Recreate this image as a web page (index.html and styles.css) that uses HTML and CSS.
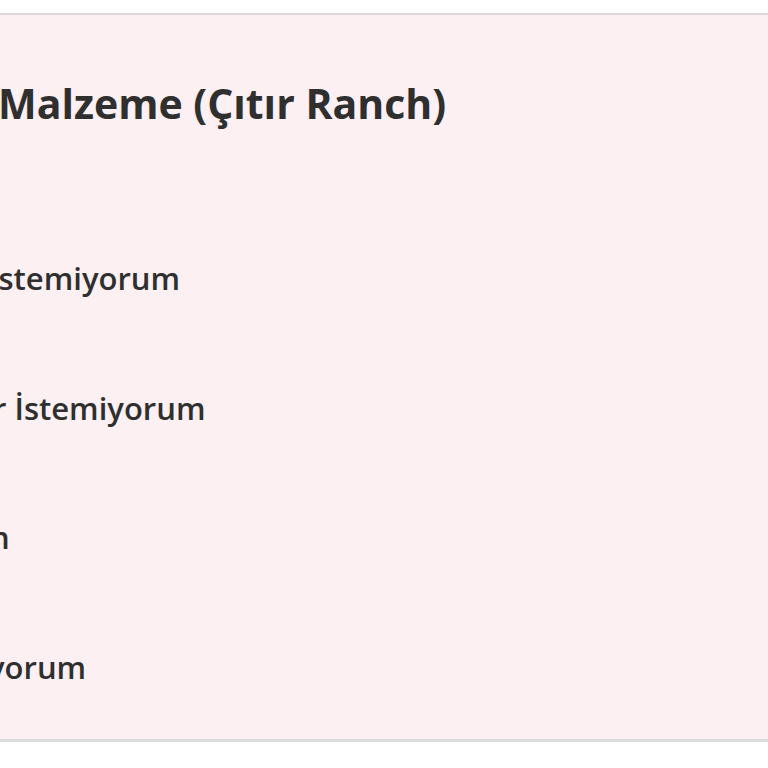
FILE: index.html
```html
<!DOCTYPE html>
<html lang="tr">
<head>
    <meta charset="UTF-8">
    <title>Ekstra Malzeme</title>
    <link rel="stylesheet" href="styles.css">
</head>
<body>
<section class="extras">
    <h3 class="extras-title">Malzeme (Çıtır Ranch)</h3>
    <ul class="extras-list">
        <li class="extras-item cut-i">İstemiyorum</li>
        <li class="extras-item cut-r">r İstemiyorum</li>
        <li class="extras-item cut-n">n</li>
        <li class="extras-item cut-y">yorum</li>
    </ul>
</section>
</body>
</html>
```

FILE: styles.css
```css
html, body {
    margin: 0;
    overflow: hidden;
    background: #ffffff;
    font-family: 'Open Sans', sans-serif;
    color: #2f2f2f;
}
.extras {
    margin-top: 13px;
    height: 729px;
    background-color: #fcf0f3;
    border-top: 2px solid #dcd8d9;
    border-bottom: 3px solid #dcdcdc;
    box-sizing: border-box;
}
.extras-title {
    margin: 0 0 0 -2px;
    padding-top: 63px;
    font-size: 41px;
    line-height: 50px;
    font-weight: 700;
}
.extras-list {
    list-style-type: none;
    margin: 0;
    padding: 130px 0 0 0;
}
.extras-item {
    font-size: 31px;
    font-weight: 600;
    line-height: 40px;
    height: 129.5px;
    white-space: nowrap;
}
.cut-i { margin-left: -11px; }
.cut-r { margin-left: -7px; }
.cut-n { margin-left: -10px; }
.cut-y { margin-left: -12px; }
```
